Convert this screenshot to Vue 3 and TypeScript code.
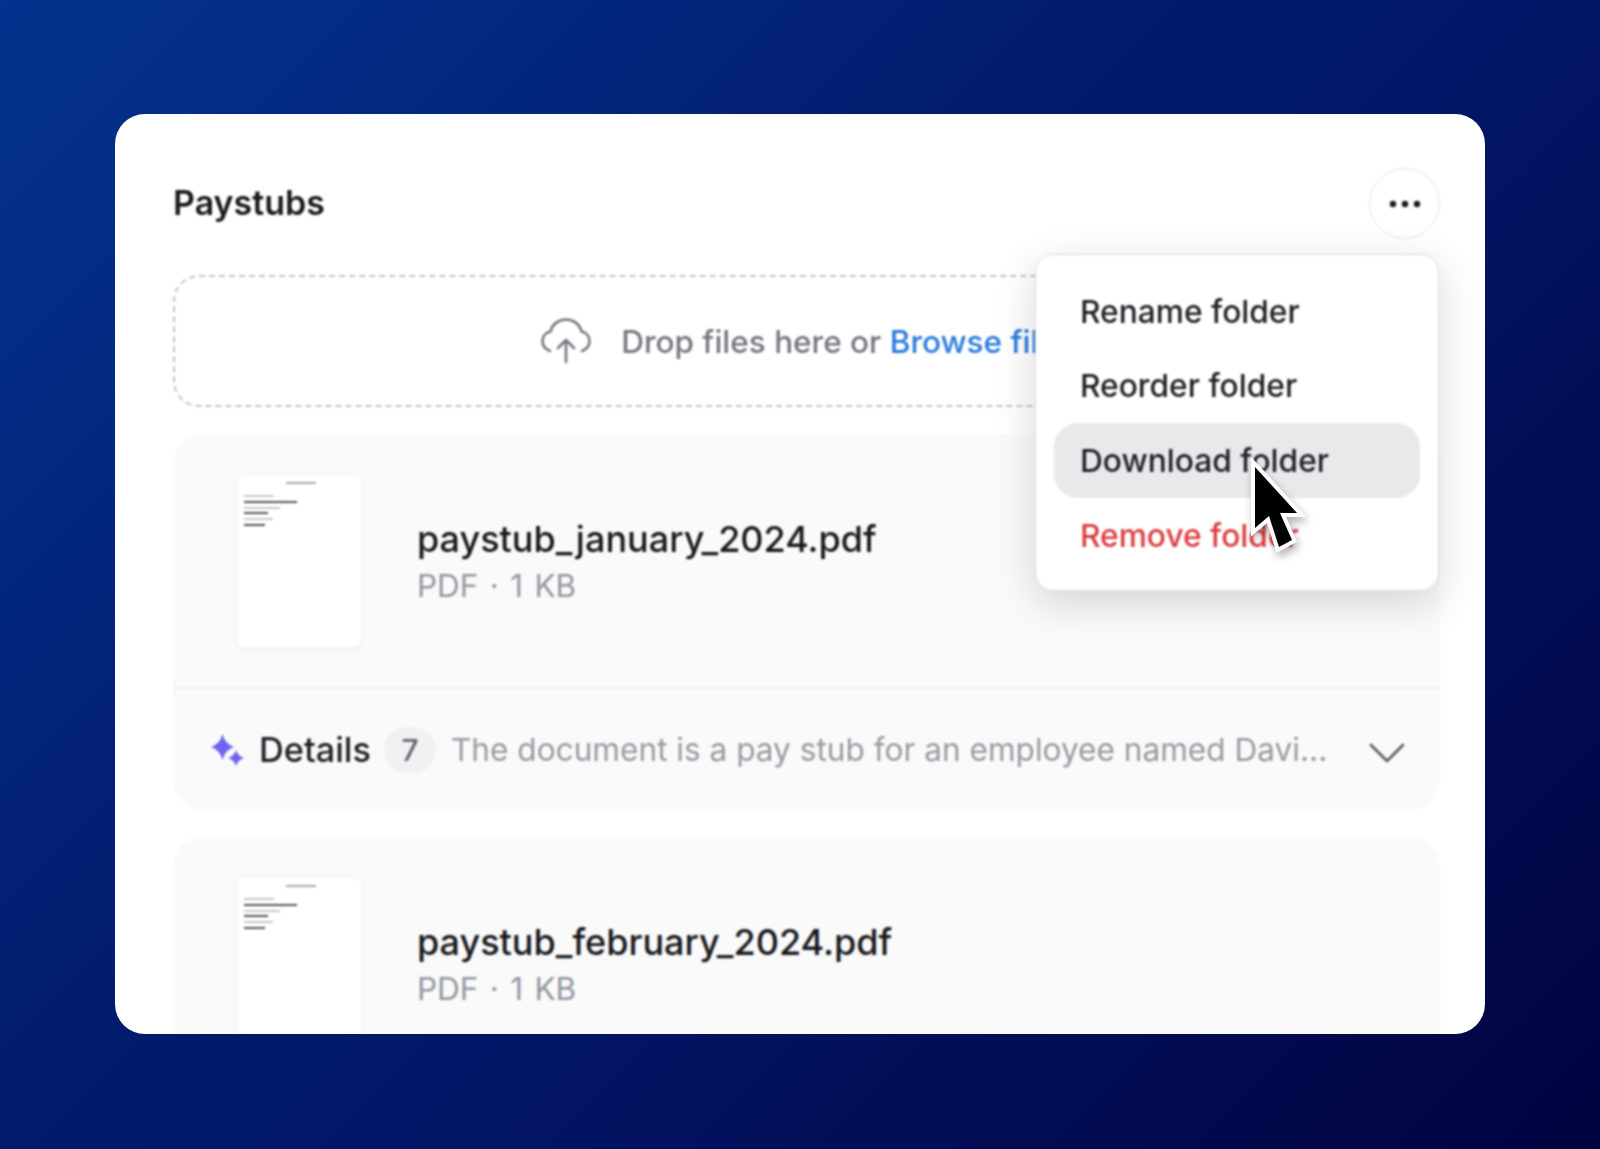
<script setup lang="ts">
interface Doc { name: string; details: boolean }
const docs: Doc[] = [
  { name: 'paystub_january_2024.pdf', details: true },
  { name: 'paystub_february_2024.pdf', details: false },
]
const menu = [
  { label: 'Rename folder', cls: '' },
  { label: 'Reorder folder', cls: '' },
  { label: 'Download folder', cls: 'active' },
  { label: 'Remove folder', cls: 'danger' },
]
const lines = [
  { w: 30, dark: false }, { w: 53, dark: true }, { w: 36, dark: false },
  { w: 24, dark: true }, { w: 29, dark: false }, { w: 21, dark: true },
]
</script>

<template>
  <main class="page">
    <section class="card">
      <div class="content">
        <header class="head">
          <h1 class="title">Paystubs</h1>
          <button class="more" aria-label="More">
            <svg width="34" height="10" viewBox="0 0 34 10"><circle cx="5" cy="5" r="3.2" /><circle cx="17" cy="5" r="3.2" /><circle cx="29" cy="5" r="3.2" /></svg>
          </button>
        </header>

        <div class="drop">
          <svg class="cloud" width="50" height="46" viewBox="0 0 50 46" fill="none" stroke="#74767f" stroke-width="2.6" stroke-linecap="round" stroke-linejoin="round">
            <path d="M9 33 C4 31 1.500 27 1.500 23 C1.500 18 5 14.500 9.500 13.500 C11 6.500 17.500 1.500 25 1.500 C32.500 1.500 39 6.500 40.500 13.500 C45 14.500 48.500 18 48.500 23 C48.500 27 46 31 41 33" />
            <path d="M25 44 V22 M17 30 L25 22 L33 30" />
          </svg>
          <span class="drop-text">Drop files here or <span class="link">Browse files</span></span>
        </div>

        <article v-for="doc in docs" :key="doc.name" class="doc">
          <div class="doc-main">
            <div class="thumb">
              <div class="thumb-title"></div>
              <div class="thumb-lines">
                <i v-for="(l, i) in lines" :key="i" :class="{ dark: l.dark }" :style="{ width: l.w + 'px' }"></i>
              </div>
            </div>
            <div class="doc-info">
              <div class="doc-name">{{ doc.name }}</div>
              <div class="doc-meta">PDF · 1 KB</div>
            </div>
          </div>
          <div v-if="doc.details" class="details">
            <svg class="spark" width="34" height="32" viewBox="0 0 34 32" fill="#6f63f2">
              <path d="M11.500 0 Q14 10 23 13 Q14 16 11.500 26 Q9 16 0 13 Q9 10 11.500 0 Z" />
              <path d="M25 16 Q26.800 22.200 33 24 Q26.800 25.800 25 32 Q23.200 25.800 17 24 Q23.200 22.200 25 16 Z" />
            </svg>
            <span class="details-label">Details</span>
            <span class="count">7</span>
            <span class="summary">The document is a pay stub for an employee named Davi...</span>
            <svg class="chev" width="36" height="22" viewBox="0 0 36 22" fill="none" stroke="#5f6069" stroke-width="2.8" stroke-linecap="round" stroke-linejoin="round"><path d="M2 3 L18 19 L34 3" /></svg>
          </div>
        </article>

        <div class="menu">
          <div v-for="m in menu" :key="m.label" class="menu-item" :class="m.cls">{{ m.label }}</div>
        </div>
      </div>

      <svg class="cursor" width="84" height="112" viewBox="0 0 84 112">
        <path d="M10 13 V74 L24 62 L34 93 L47 86 L35 59 H52 Z" fill="#000" stroke="#fff" stroke-width="8" stroke-linejoin="miter" stroke-miterlimit="10" paint-order="stroke" />
      </svg>
    </section>
  </main>
</template>

<style>
html, body { margin: 0; background: #01033f; }
</style>

<style scoped>
.page {
  width: 1600px;
  height: 1149px;
  box-sizing: border-box;
  padding: 114px 115px 115px;
  overflow: hidden;
  background: linear-gradient(135deg, #03338f 0%, #021b6c 42%, #021565 58%, #01033f 100%);
  font-family: Inter, "Liberation Sans", sans-serif;
}
.card {
  position: relative;
  width: 1370px;
  height: 920px;
  border-radius: 30px;
  background: #fff;
  overflow: hidden;
}
.content {
  box-sizing: border-box;
  height: 100%;
  padding: 54px 45px 0 58px;
  display: flex;
  flex-direction: column;
  filter: blur(0.8px);
}
.head {
  display: flex;
  align-items: center;
  justify-content: space-between;
  height: 71px;
  margin-bottom: 36px;
  flex: none;
}
.title {
  margin: -2px 0 0;
  font-size: 34px;
  font-weight: 600;
  color: #18191c;
}
.more {
  width: 71px;
  height: 71px;
  padding: 0;
  display: flex;
  align-items: center;
  justify-content: center;
  border: 1.500px solid #e4e4e6;
  border-radius: 50%;
  background: #fff;
}
.more svg { fill: #18191c; }
.drop {
  flex: none;
  height: 132px;
  margin-right: 1px;
  padding-left: 3px;
  box-sizing: border-box;
  border: 2px dashed #c4c4c8;
  border-radius: 26px;
  display: flex;
  align-items: center;
  justify-content: center;
  gap: 30px;
  margin-bottom: 27px;
}
.drop-text {
  font-size: 31.500px;
  font-weight: 500;
  color: #74767f;
  white-space: nowrap;
}
.link { color: #2679dc; }
.doc {
  flex: none;
  margin-bottom: 27px;
  border-radius: 30px;
  background: #fafafb;
}
.doc-main {
  height: 255px;
  box-sizing: border-box;
  padding: 41px 0 0 65px;
  display: flex;
  gap: 56px;
  border-bottom: 2px solid #eeeef0;
}
.thumb {
  width: 123px;
  height: 172px;
  box-sizing: border-box;
  padding: 7px 6px;
  border-radius: 7px;
  background: #fff;
  box-shadow: 0 2px 10px rgba(20, 20, 40, 0.05);
}
.thumb-title {
  width: 30px;
  height: 2px;
  margin: 0 auto 11px 42px;
  background: #a8a8ad;
}
.thumb-lines { display: flex; flex-direction: column; gap: 3.800px; }
.thumb-lines i { display: block; height: 2px; background: #c8c8cc; }
.thumb-lines i.dark { background: #55555a; }
.doc-info { padding-top: 41px; }
.doc-name {
  font-size: 36px;
  line-height: 46px;
  font-weight: 500;
  color: #18191c;
  white-space: nowrap;
}
.doc-meta {
  margin-top: 2px;
  font-size: 31.500px;
  line-height: 44px;
  word-spacing: 2.500px;
  color: #94969f;
  white-space: nowrap;
}
.details {
  height: 121px;
  box-sizing: border-box;
  padding: 0 35px 0 38px;
  display: flex;
  align-items: center;
}
.spark { flex: none; }
.details-label {
  margin-left: 14px;
  font-size: 34.300px;
  font-weight: 500;
  color: #1f2024;
}
.count {
  flex: none;
  width: 52px;
  height: 46px;
  margin-left: 13px;
  border-radius: 23px;
  background: #f1f1f3;
  display: flex;
  align-items: center;
  justify-content: center;
  font-size: 30px;
  font-weight: 500;
  color: #65666f;
}
.summary {
  margin-left: 15px;
  font-size: 31.600px;
  color: #989aa1;
  white-space: nowrap;
}
.chev { margin: 6px 0 0 auto; flex: none; }
.menu {
  position: absolute;
  left: 920px;
  top: 140px;
  width: 404px;
  height: 337px;
  box-sizing: border-box;
  padding: 19px 18px;
  border: 1.500px solid #dcdcde;
  border-radius: 18px;
  background: #fff;
  box-shadow: 0 12px 40px rgba(20, 20, 40, 0.16);
  display: flex;
  flex-direction: column;
}
.menu-item {
  height: 74.600px;
  flex: none;
  box-sizing: border-box;
  padding-left: 26px;
  display: flex;
  align-items: center;
  border-radius: 24px;
  font-size: 31.700px;
  font-weight: 500;
  color: #1f2024;
}
.menu-item.active { background: #e9e9eb; }
.menu-item.danger { color: #dc3c3e; }
.cursor {
  position: absolute;
  left: 1130px;
  top: 340px;
  filter: drop-shadow(2px 5px 4px rgba(0, 0, 0, 0.3));
}
</style>
